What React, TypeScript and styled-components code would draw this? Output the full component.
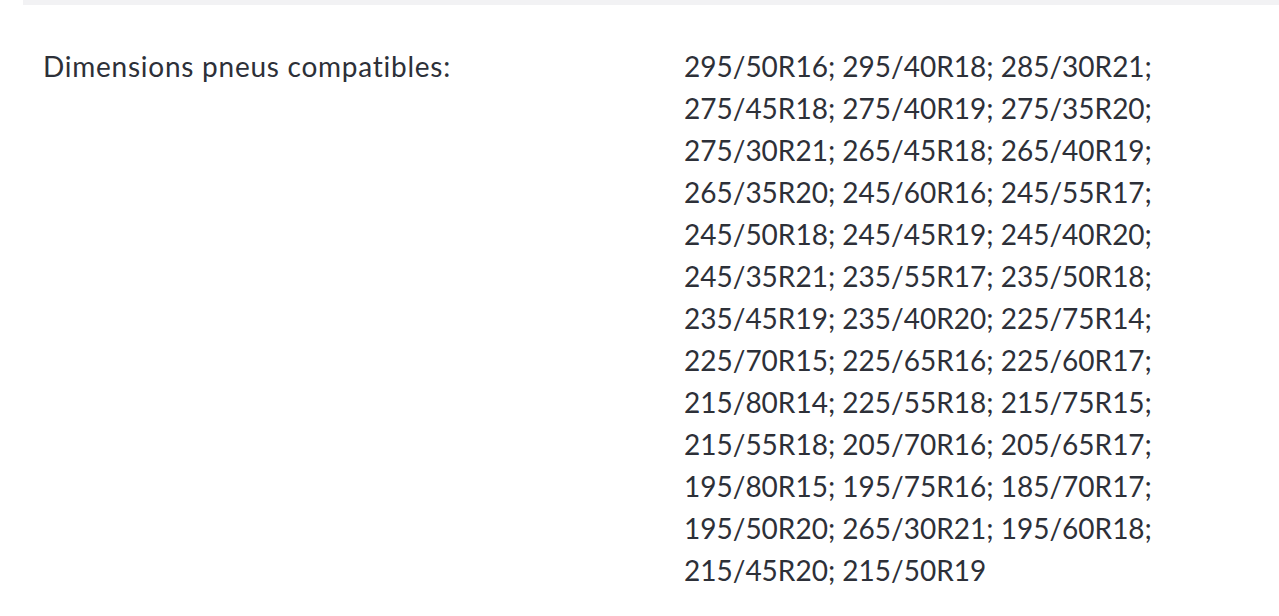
import React from "react";
import styled, { createGlobalStyle } from "styled-components";

const Global = createGlobalStyle`
  html, body { margin: 0; padding: 0; background: #ffffff; }
  body { font-family: "Lato", "Open Sans", sans-serif; }
`;

const Page = styled.div`
  padding-left: 23px;
  width: 1256px;
`;

const TopBar = styled.div`
  height: 5px;
  background: #f2f2f4;
`;

const Row = styled.div`
  display: grid;
  grid-template-columns: 641px 560px;
  padding: 40px 0 0 20px;
  color: #2d3038;
  font-size: 28px;
  line-height: 42px;
`;

const Label = styled.div`
  letter-spacing: 0.75px;
`;

const Value = styled.div`
  letter-spacing: 0;
`;

const sizes = [
  "295/50R16", "295/40R18", "285/30R21", "275/45R18", "275/40R19", "275/35R20",
  "275/30R21", "265/45R18", "265/40R19", "265/35R20", "245/60R16", "245/55R17",
  "245/50R18", "245/45R19", "245/40R20", "245/35R21", "235/55R17", "235/50R18",
  "235/45R19", "235/40R20", "225/75R14", "225/70R15", "225/65R16", "225/60R17",
  "215/80R14", "225/55R18", "215/75R15", "215/55R18", "205/70R16", "205/65R17",
  "195/80R15", "195/75R16", "185/70R17", "195/50R20", "265/30R21", "195/60R18",
  "215/45R20", "215/50R19",
];

export default function App() {
  return (
    <>
      <Global />
      <Page>
        <TopBar />
        <Row>
          <Label>Dimensions pneus compatibles:</Label>
          <Value>{sizes.join("; ")}</Value>
        </Row>
      </Page>
    </>
  );
}
